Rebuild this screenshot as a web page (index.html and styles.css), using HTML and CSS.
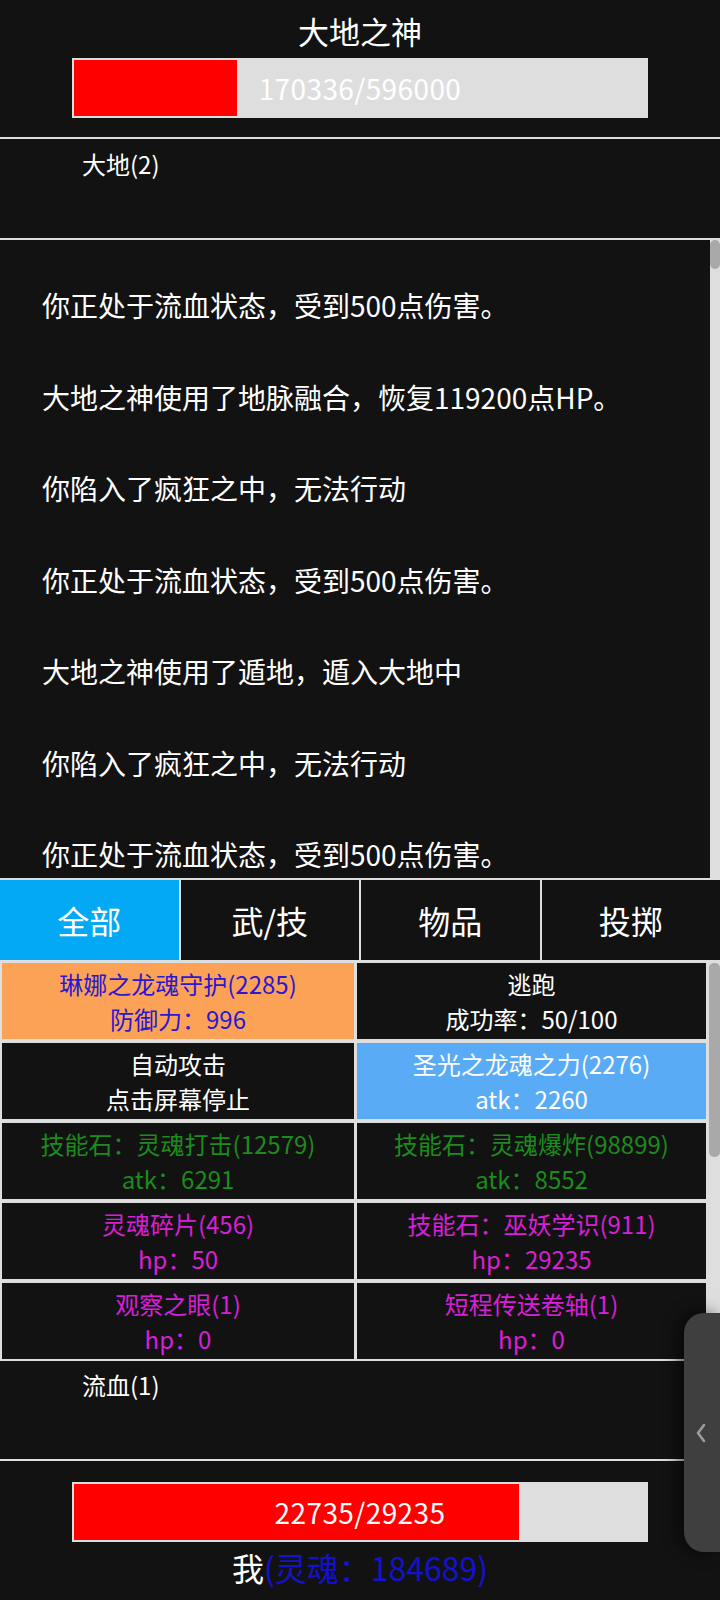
FILE: index.html
```html
<!DOCTYPE html>
<html lang="zh-CN">
<head>
    <meta charset="UTF-8">
    <title>战斗</title>
    <link rel="stylesheet" href="styles.css">
</head>
<body>
    <div class="screen">
        <!-- 敌人信息 -->
        <header class="enemy">
            <div class="enemy-name">大地之神</div>
            <div class="hp-bar">
                <div class="hp-fill" style="width: 28.58%"></div>
                <span class="hp-text">170336/596000</span>
            </div>
        </header>

        <div class="status">大地(2)</div>

        <!-- 战斗日志 -->
        <div class="log">
            <div class="log-list">
                <p>你正处于流血状态，受到500点伤害。</p>
                <p>大地之神使用了地脉融合，恢复119200点HP。</p>
                <p>你陷入了疯狂之中，无法行动</p>
                <p>你正处于流血状态，受到500点伤害。</p>
                <p>大地之神使用了遁地，遁入大地中</p>
                <p>你陷入了疯狂之中，无法行动</p>
                <p>你正处于流血状态，受到500点伤害。</p>
            </div>
            <div class="scrollbar log-scrollbar"><div class="thumb"></div></div>
        </div>

        <!-- 分类 -->
        <nav class="tabs">
            <div class="tab active">全部</div>
            <div class="tab">武/技</div>
            <div class="tab">物品</div>
            <div class="tab">投掷</div>
        </nav>

        <!-- 行动列表 -->
        <div class="actions">
            <div class="action-grid">
                <div class="cell orange blue-text">
                    <span class="line">琳娜之龙魂守护(2285)</span>
                    <span class="line">防御力：996</span>
                </div>
                <div class="cell">
                    <span class="line">逃跑</span>
                    <span class="line">成功率：50/100</span>
                </div>
                <div class="cell">
                    <span class="line">自动攻击</span>
                    <span class="line">点击屏幕停止</span>
                </div>
                <div class="cell sky">
                    <span class="line">圣光之龙魂之力(2276)</span>
                    <span class="line">atk：2260</span>
                </div>
                <div class="cell green">
                    <span class="line">技能石：灵魂打击(12579)</span>
                    <span class="line">atk：6291</span>
                </div>
                <div class="cell green">
                    <span class="line">技能石：灵魂爆炸(98899)</span>
                    <span class="line">atk：8552</span>
                </div>
                <div class="cell magenta">
                    <span class="line">灵魂碎片(456)</span>
                    <span class="line">hp：50</span>
                </div>
                <div class="cell magenta">
                    <span class="line">技能石：巫妖学识(911)</span>
                    <span class="line">hp：29235</span>
                </div>
                <div class="cell magenta">
                    <span class="line">观察之眼(1)</span>
                    <span class="line">hp：0</span>
                </div>
                <div class="cell magenta">
                    <span class="line">短程传送卷轴(1)</span>
                    <span class="line">hp：0</span>
                </div>
            </div>
            <div class="scrollbar grid-scrollbar"><div class="thumb"></div></div>
        </div>

        <div class="status status-player">流血(1)</div>

        <!-- 玩家信息 -->
        <footer class="player">
            <div class="hp-bar">
                <div class="hp-fill" style="width: 77.77%"></div>
                <span class="hp-text">22735/29235</span>
            </div>
            <div class="player-name">我<span class="soul">(灵魂：184689)</span></div>
        </footer>

        <!-- 侧边栏把手 -->
        <div class="side-handle">
            <svg width="12" height="20" viewBox="0 0 12 20">
                <polyline points="9,2 3,10 9,18" fill="none" stroke="#9c9c9c" stroke-width="2.6" stroke-linecap="round" stroke-linejoin="round"/>
            </svg>
        </div>
    </div>
</body>
</html>
```

FILE: styles.css
```css
/* 全体 */
body {
    margin: 0;
    padding: 0;
    background-color: #dedede;
    font-family: "Noto Sans CJK SC", "Noto Sans", sans-serif;
    color: #fff;
}

.screen {
    position: relative;
    width: 720px;
    height: 1600px;
    overflow: hidden;
    background-color: #dedede;
}

/* 敌人 */
.enemy {
    background-color: #121212;
    height: 137px;
    padding-top: 11px;
    box-sizing: border-box;
    margin-bottom: 2px;
}

.enemy-name {
    text-align: center;
    font-size: 31px;
    line-height: 40px;
    margin-bottom: 7px;
}

.hp-bar {
    position: relative;
    width: 576px;
    height: 60px;
    margin: 0 auto;
    background-color: #dedede;
    padding: 2px;
    box-sizing: border-box;
}

.hp-fill {
    height: 100%;
    background-color: #ff0000;
}

.hp-text {
    position: absolute;
    left: 0;
    right: 0;
    top: 0;
    bottom: 0;
    display: flex;
    align-items: center;
    justify-content: center;
    font-size: 28px;
    letter-spacing: 0.4px;
    color: #fff;
}

/* 状态 */
.status {
    background-color: #121212;
    height: 99px;
    box-sizing: border-box;
    padding: 12px 0 0 82px;
    font-size: 24px;
    line-height: 26px;
    margin-bottom: 2px;
}

.status-player {
    height: 98px;
    padding-top: 11px;
}

/* 日志 */
.log {
    display: flex;
    height: 638px;
    background-color: #121212;
    margin-bottom: 2px;
    overflow: hidden;
}

.log-list {
    flex: 1;
    padding: 47px 0 0 42px;
}

.log-list p {
    margin: 0 0 55.5px;
    font-size: 28px;
    line-height: 36px;
    white-space: nowrap;
}

.scrollbar {
    width: 10px;
    background-color: #dedede;
}

.thumb {
    width: 10px;
    background-color: #a9a9a9;
    border-radius: 5px;
}

.log-scrollbar .thumb {
    height: 29px;
}

/* 分类 */
.tabs {
    display: grid;
    grid-template-columns: repeat(4, 1fr);
    gap: 2px;
    height: 80px;
    margin-bottom: 3px;
}

.tab {
    background-color: #121212;
    display: flex;
    align-items: center;
    justify-content: center;
    font-size: 32px;
}

.tab.active {
    background-color: #03a9f4;
}

/* 行动 */
.actions {
    display: flex;
    height: 398px;
    padding-left: 2px;
}

.action-grid {
    display: grid;
    grid-template-columns: 352px 349px;
    grid-auto-rows: 76px;
    gap: 4px 3px;
}

.cell {
    background-color: #121212;
    display: flex;
    flex-direction: column;
    align-items: center;
    justify-content: center;
    text-align: center;
    font-size: 24px;
    line-height: 35px;
    color: #fff;
}

.line {
    display: block;
    white-space: nowrap;
}

.cell.orange {
    background-color: #fca257;
}

.cell.sky {
    background-color: #5aabf6;
}

.blue-text {
    color: #2a18d2;
}

.green {
    color: #1c8c1c;
}

.magenta {
    color: #d81fd8;
}

.grid-scrollbar {
    width: 11px;
    margin-left: 3px;
}

.grid-scrollbar .thumb {
    width: 11px;
    height: 194px;
}

/* 玩家 */
.player {
    background-color: #121212;
    height: 139px;
    padding-top: 21px;
    box-sizing: border-box;
}

.player-name {
    text-align: center;
    font-size: 32px;
    line-height: 40px;
    margin-top: 5px;
}

.soul {
    color: #1212cf;
}

/* 侧边栏 */
.side-handle {
    position: absolute;
    right: 0;
    top: 1313px;
    width: 36px;
    height: 239px;
    background-color: #3f3f3f;
    border-radius: 20px 0 0 20px;
    box-shadow: -6px 0 16px rgba(0, 0, 0, 0.55);
    display: flex;
    align-items: center;
    padding-left: 11px;
    box-sizing: border-box;
}
```
